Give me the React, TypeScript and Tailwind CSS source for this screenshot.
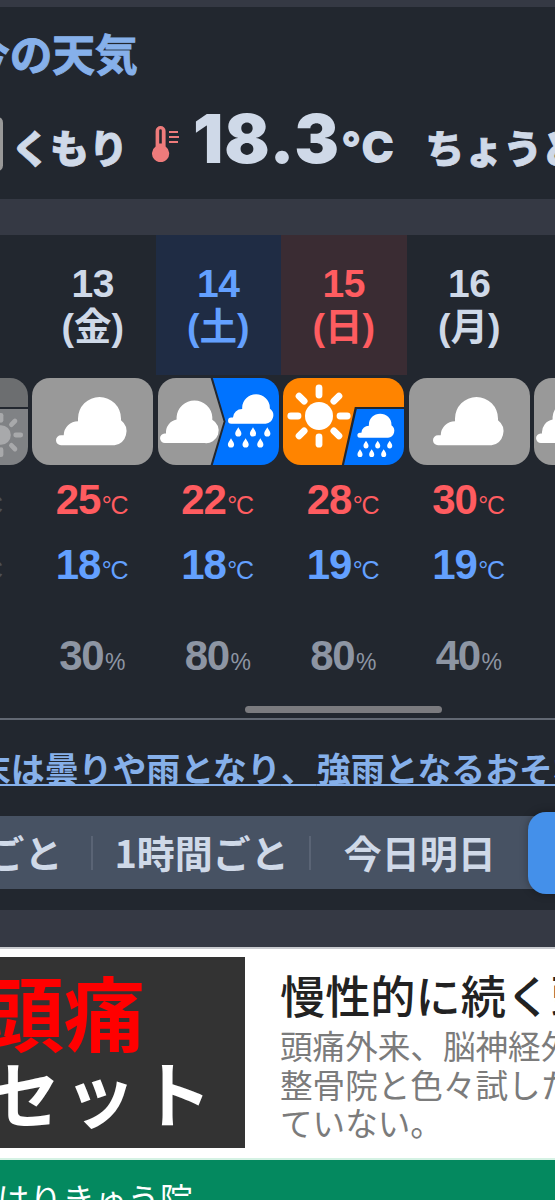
const JP = "font-['Noto_Sans_CJK_JP',sans-serif]";
const HELV = "font-['Liberation_Sans','Noto_Sans_CJK_JP',sans-serif]";

const CLOUD =
  "M29 67.2a5 5 0 0 1 0-10h2.7A14.3 14.3 0 0 1 46 43.3V40.5a21.5 21.5 0 0 1 43 0V42.3A14 14 0 0 1 82.5 67.2z";
const CLOUD_NARROW =
  "M7 65a4.8 4.8 0 0 1-.3-9.6h1.3A13 13 0 0 1 18.6 41.5V39a17.9 17.9 0 0 1 35.7 0v2.7A12.5 12.5 0 0 1 46.5 65z";

const Drop = ({ x, y, s = 1 }: { x: number; y: number; s?: number }) => (
  <path transform={`translate(${x} ${y}) scale(${s})`} d="M0 0C1.2 2.4 3.1 4 3.1 6.3a3.1 3.1 0 0 1-6.2 0C-3.1 4-1.2 2.4 0 0z" />
);

const Sun = ({ cx, cy, s = 1 }: { cx: number; cy: number; s?: number }) => (
  <g transform={`translate(${cx} ${cy}) scale(${s})`}>
    <circle r="14" fill="currentColor" />
    {[0, 45, 90, 135, 180, 225, 270, 315].map((a) => (
      <path key={a} d="M21 0H28.2" stroke="currentColor" strokeWidth="6.8" strokeLinecap="round" transform={`rotate(${a})`} />
    ))}
  </g>
);

const Icon = ({ type }: { type: string }) => (
  <svg viewBox="0 0 121 87" className="h-[87px] w-[121px] rounded-[18px] text-white">
    {type === "cloud" && (
      <>
        <rect width="121" height="87" fill="#999" />
        <path d={CLOUD} fill="#fff" />
      </>
    )}
    {type === "cloud-rain" && (
      <>
        <path d="M0 0H52.6L65.6 43.5L52.6 87H0z" fill="#999" />
        <path d="M54.8 0H121V87H54.8L67.6 43.5z" fill="#0073ff" />
        <path d={CLOUD_NARROW} fill="#fff" />
        <g fill="#fff">
          <path d={CLOUD} transform="matrix(.643 0 0 .61 54.6 4.7)" />
          <Drop x={80.3} y={49.2} />
          <Drop x={95} y={49.2} />
          <Drop x={109.3} y={49.2} />
          <Drop x={73} y={60.2} />
          <Drop x={87.6} y={60.2} />
          <Drop x={102.3} y={60.2} />
        </g>
      </>
    )}
    {type === "sun-rain" && (
      <>
        <path d="M0 0H121V29H71.8L58.8 87H0z" fill="#ff8400" />
        <path d="M73.8 31H121V87H61z" fill="#0073ff" />
        <Sun cx={36} cy={38} />
        <g fill="#fff">
          <path d={CLOUD} transform="matrix(.524 0 0 .5 61.8 26.2)" />
          <Drop x={83} y={62.7} s={0.82} />
          <Drop x={94.7} y={62.7} s={0.82} />
          <Drop x={106.7} y={62.7} s={0.82} />
          <Drop x={77} y={71.3} s={0.82} />
          <Drop x={88.7} y={71.3} s={0.82} />
          <Drop x={100.7} y={71.3} s={0.82} />
        </g>
      </>
    )}
    {type === "past" && (
      <>
        <path d="M0 0H121V29H71.8L58.8 87H0z" fill="#6c6e70" />
        <path d="M73.8 31H121V87H61z" fill="#808285" />
        <g className="text-[#a8a9ab]">
          <Sun cx={94} cy={57} s={0.7} />
        </g>
      </>
    )}
  </svg>
);

const days = [
  { date: "12", day: "木", icon: "past", high: 22, low: 17, rain: 0, head: "text-[#22272f]", past: true },
  { date: "13", day: "金", icon: "cloud", high: 25, low: 18, rain: 30, head: "text-[#cfd9e8]" },
  { date: "14", day: "土", icon: "cloud-rain", high: 22, low: 18, rain: 80, head: "bg-[#1f2c44] text-[#63a0ff]" },
  { date: "15", day: "日", icon: "sun-rain", high: 28, low: 19, rain: 80, head: "bg-[#3a2c33] text-[#ff5c60]" },
  { date: "16", day: "月", icon: "cloud", high: 30, low: 19, rain: 40, head: "text-[#cfd9e8]" },
  { date: "17", day: "火", icon: "cloud-rain", high: 26, low: 19, rain: 50, head: "text-[#cfd9e8]" },
];

const Value = ({ value, unit, className }: { value: number; unit: string; className: string }) => (
  <p className={`-ml-[2px] text-[42px] font-bold tracking-[-1.2px] ${className}`}>
    {value}
    <span className={`leading-none font-normal ${unit === "%" ? "ml-[1.5px] text-[23px]" : "ml-[1.5px] text-[25px] tracking-[-1px]"}`}>{unit}</span>
  </p>
);

const Now = () => (
  <section className="h-48 overflow-hidden bg-[#22272f] pt-[15px]">
    <h2 className={`-ml-[33px] h-[60px] text-[42.7px] leading-[61px] font-bold whitespace-nowrap text-[#86b0ea] [-webkit-text-stroke:1px] ${JP}`}>今の天気</h2>
    <div className="mt-6 flex items-baseline whitespace-nowrap text-[#cfd9e8]">
      <div className="mt-[11px] -ml-2 h-[54px] w-[11px] shrink-0 self-start rounded-lg bg-[#999]" />
      <span className={`ml-[8px] text-[39px] leading-[50px] font-black [-webkit-text-stroke:0.8px] ${JP}`}>くもり</span>
      <svg viewBox="0 0 27 36" className="mt-[20px] ml-[24px] h-9 w-[27px] shrink-0 self-start" fill="#ee7b7b">
        <path fillRule="evenodd" d="M3.6 5a5 5 0 0 1 10 0v15.6a8.6 8.6 0 1 1-10 0zM7.2 4.5v13h2.6v-13a1.3 1.3 0 0 0-2.6 0z" />
        <path d="M17 5h9v2h-9zM17 10h10v2H17zM17 15h9v2h-9z" />
      </svg>
      <span className="ml-[14px] font-['Inter',sans-serif] text-[67px] leading-[66px] font-black tracking-[1px]">18.3</span>
      <span className="ml-[1px] font-['Inter',sans-serif] text-[44px] leading-[66px] font-black tracking-[1px]">°C</span>
      <span className={`ml-[30px] text-[39px] leading-[50px] font-black [-webkit-text-stroke:0.8px] ${JP}`}>ちょうど良い</span>
    </div>
  </section>
);

const Forecast = () => (
  <section className="h-[675px] overflow-hidden bg-[#22272f]">
    <div className={`-ml-[95.5px] flex h-[483px] ${HELV}`}>
      {days.map((d) => (
        <div key={d.date} className="flex w-[125.5px] shrink-0 flex-col items-center">
          <div className={`h-[140px] w-full pt-[27px] text-center text-[39px] leading-[44px] font-bold ${d.head}`}>
            <p className="tracking-[-0.5px]">{d.date}</p>
            <p className="-mt-[1px] text-[37.5px]">({d.day})</p>
          </div>
          <div className="mt-[3px] h-[89px]">
            <Icon type={d.icon} />
          </div>
          <Value value={d.high} unit="°C" className={`h-[65px] leading-[65px] ${d.past ? "text-[#4b4f56]" : "text-[#ff5c60]"}`} />
          <Value value={d.low} unit="°C" className={`h-[65px] leading-[65px] ${d.past ? "text-[#4b4f56]" : "text-[#63a0ff]"}`} />
          <Value value={d.rain} unit="%" className="mt-[29px] h-[60px] leading-[60px] text-[#8d95a3]" />
        </div>
      ))}
    </div>
    <div className="-mt-[12px] ml-[245px] h-[7px] w-[197px] rounded-full bg-[#7b7b7f]" />
    <div className="mt-[5px] h-[2px] bg-[#626873]" />
    <p className={`mt-[22px] -ml-[57px] h-[51px] text-[33.9px] leading-[51px] font-bold whitespace-nowrap text-[#86b0ea] underline decoration-2 underline-offset-[2px] ${JP}`}>
      週末は曇りや雨となり<span className="tracking-[2px]">、</span>強雨となるおそれ
    </p>
    <div className={`mt-[23px] flex h-[73px] items-center bg-[#475263] text-[38px] leading-[56px] font-bold whitespace-nowrap text-[#cfd9e8] ${JP}`}>
      <span className="-mt-[2px] -ml-[36px]">3ごと</span>
      <i className="ml-[29px] h-[34px] w-[2px] shrink-0 bg-[#5a6475]" />
      <span className="-mt-[2px] ml-[21px]">1時間ごと</span>
      <i className="ml-[20px] h-[34px] w-[2px] shrink-0 bg-[#5a6475]" />
      <span className="-mt-[2px] ml-[33px]">今日明日</span>
      <div className="ml-[32px] h-[82px] w-40 shrink-0 rounded-[18px] bg-[#4490ea] shadow-[0_0_8px_rgba(0,0,0,0.3)]" />
    </div>
  </section>
);

const Ad = () => (
  <section className={`h-[213px] overflow-hidden border-t-2 border-[#c9cbd0] bg-white ${JP}`}>
    <div className="flex h-[209px] whitespace-nowrap">
      <div className="mt-[8px] h-[191px] w-[245px] shrink-0 overflow-hidden bg-[#333] pt-[12px] leading-[82px] font-bold">
        <p className="-ml-[17px] h-[81px] text-[81px] text-[#f00]">頭痛</p>
        <p className="-ml-[88px] h-[82px] text-[72px] tracking-[4px] text-white">リセット</p>
      </div>
      <div className="ml-[35px] pt-[15px]">
        <p className="text-[45.2px] leading-[62px] font-medium text-[#222]">慢性的に続く頭痛</p>
        <div className="text-[32.6px] leading-[38.7px] text-[#7b7b7b]">
          <p>頭痛外来、脳神経外科</p>
          <p>整骨院と色々試したが</p>
          <p>ていない。</p>
        </div>
      </div>
    </div>
    <div className="h-[2px] bg-[#d5f2e4]" />
  </section>
);

export default function App() {
  return (
    <div className="h-[1200px] w-[555px] overflow-hidden bg-[#353944]">
      <div className="pt-[7px]">
        <Now />
      </div>
      <div className="mt-9">
        <Forecast />
      </div>
      <div className="mt-[37px]">
        <Ad />
      </div>
      <div className={`h-10 overflow-hidden bg-[#04895f] pt-[13px] text-[32.6px] leading-[50px] whitespace-nowrap text-white ${JP}`}>
        <p className="-ml-[3px]">はりきゅう院</p>
      </div>
    </div>
  );
}
